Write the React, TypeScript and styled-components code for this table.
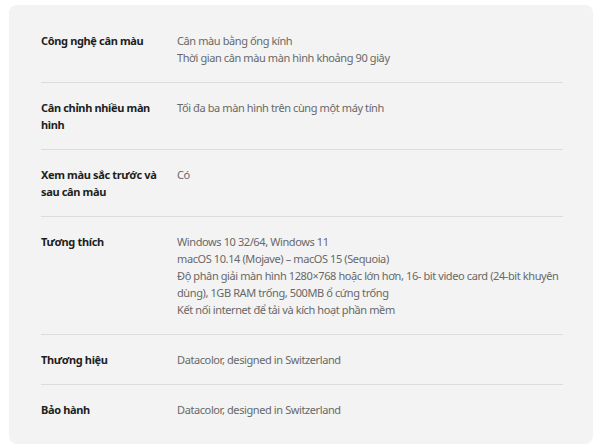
import React from "react";
import styled, { createGlobalStyle } from "styled-components";

const Global = createGlobalStyle`
  html, body { margin: 0; padding: 0; background: #ffffff; }
  body { font-family: "Noto Sans", "Open Sans", sans-serif; }
`;

const Page = styled.div`
  padding: 5px 11px 4px 9px;
`;

const Card = styled.div`
  background: #f3f3f3;
  border-radius: 8px;
  padding: 11px 30px 10px 32px;
`;

const Row = styled.div<{ $first?: boolean }>`
  display: grid;
  grid-template-columns: 136px 1fr;
  padding: 16px 0;
  border-top: ${(p) => (p.$first ? "none" : "1px solid #dcdcdc")};
  font-size: 11px;
  letter-spacing: -0.4px;
  line-height: 17px;
`;

const Label = styled.div`
  font-weight: 700;
  color: #1e1e1e;
  padding-right: 16px;
  letter-spacing: -0.35px;
`;

const Value = styled.div`
  color: #686868;
`;

const Line = styled.div``;

const rows: { label: string; lines: string[] }[] = [
  { label: "Công nghệ cân màu", lines: ["Cân màu bằng ống kính", "Thời gian cân màu màn hình khoảng 90 giây"] },
  { label: "Cân chỉnh nhiều màn hình", lines: ["Tối đa ba màn hình trên cùng một máy tính"] },
  { label: "Xem màu sắc trước và sau cân màu", lines: ["Có"] },
  {
    label: "Tương thích",
    lines: [
      "Windows 10 32/64, Windows 11",
      "macOS 10.14 (Mojave) – macOS 15 (Sequoia)",
      "Độ phân giải màn hình 1280×768 hoặc lớn hơn, 16- bit video card (24-bit khuyên dùng), 1GB RAM trống, 500MB ổ cứng trống",
      "Kết nối internet để tải và kích hoạt phần mềm",
    ],
  },
  { label: "Thương hiệu", lines: ["Datacolor, designed in Switzerland"] },
  { label: "Bảo hành", lines: ["Datacolor, designed in Switzerland"] },
];

export default function App() {
  return (
    <>
      <Global />
      <Page>
        <Card>
          {rows.map((r, i) => (
            <Row key={r.label} $first={i === 0}>
              <Label>{r.label}</Label>
              <Value>
                {r.lines.map((l) => (
                  <Line key={l}>{l}</Line>
                ))}
              </Value>
            </Row>
          ))}
        </Card>
      </Page>
    </>
  );
}
